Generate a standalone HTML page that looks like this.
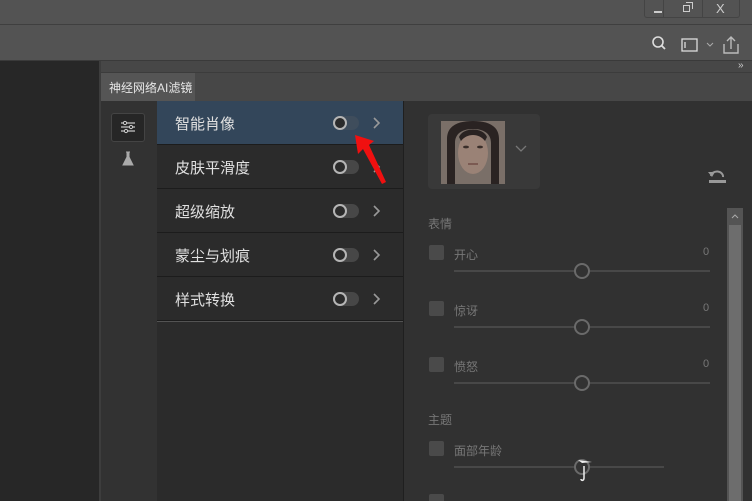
<!DOCTYPE html><html><head><meta charset="utf-8"><style>
*,*:before{margin:0;padding:0;box-sizing:border-box}
html,body{width:752px;height:501px;overflow:hidden}
body{background:#535353;position:relative;font-family:"Liberation Sans","Noto Sans CJK SC",sans-serif}
.a{position:absolute}
.row{position:absolute;left:157px;width:246px;height:44px;border-bottom:1px solid #1c1c1c;background:#2b2b2b}
.row span{position:absolute;left:18px;top:12px;font-size:15px;color:#e0e0e0}
.tg{position:absolute;left:176px;top:15px;width:26px;height:14px;border-radius:7px;background:#474747}
.tg:before{content:"";position:absolute;left:0;top:0;width:14px;height:14px;border-radius:50%;border:2px solid #b5b5b5;background:#2b2b2b}
.ch{position:absolute;left:216px;top:16px}
.lbl{position:absolute;font-size:12px;color:#777}
.cb{position:absolute;left:429px;width:15px;height:15px;border-radius:2px;background:#4a4a4a}
.sl{position:absolute;left:454px;width:256px;height:2px;background:#484848}
.th{position:absolute;left:574px;width:16px;height:16px;border-radius:50%;border:2px solid #6a6a6a;background:#323232}
</style></head><body>
<div class="a" style="left:0;top:24px;width:752px;height:1px;background:#3f3f3f"></div>
<div class="a" style="left:644px;top:0;width:96px;height:18px;border:1px solid #444;border-top:none;border-radius:0 0 3px 3px"></div>
<div class="a" style="left:663px;top:0;width:1px;height:18px;background:#444"></div>
<div class="a" style="left:702px;top:0;width:1px;height:18px;background:#444"></div>
<div class="a" style="left:654px;top:11px;width:8px;height:2px;background:#ccc"></div>
<div class="a" style="left:683px;top:5px;width:7px;height:7px;border:1px solid #ccc"></div>
<div class="a" style="left:686px;top:2px;width:7px;height:7px;border:1px solid #ccc;border-left:none;border-bottom:none"></div>
<div class="a" style="left:716px;top:1px;font-size:13px;color:#ccc">X</div>
<svg class="a" style="left:650px;top:35px" width="90" height="20" viewBox="0 0 90 20"><circle cx="8" cy="7" r="5" fill="none" stroke="#ddd" stroke-width="1.6"/><line x1="11.5" y1="10.5" x2="15" y2="14" stroke="#ddd" stroke-width="1.8"/><rect x="32" y="4" width="15" height="12" fill="none" stroke="#ddd" stroke-width="1.3"/><line x1="35" y1="7" x2="35" y2="13" stroke="#ddd" stroke-width="1.3"/><path d="M57 8l3 3 3-3" fill="none" stroke="#aaa" stroke-width="1"/><path d="M74 9v9h14V9M81 14V2M77 6l4-4 4 4" fill="none" stroke="#bbb" stroke-width="1.4"/></svg>
<div class="a" style="left:0;top:60px;width:752px;height:1px;background:#3a3a3a"></div>
<div class="a" style="left:0;top:61px;width:99px;height:440px;background:#272727"></div>
<div class="a" style="left:99px;top:61px;width:2px;height:440px;background:#3d3d3d"></div>
<div class="a" style="left:101px;top:61px;width:651px;height:11px;background:#474747"></div>
<div class="a" style="left:738px;top:60px;font-size:10px;color:#ccc">»</div>
<div class="a" style="left:101px;top:72px;width:651px;height:29px;background:#474747;border-top:1px solid #3c3c3c"></div>
<div class="a" style="left:101px;top:73px;width:94px;height:28px;background:#555"></div>
<div class="a" style="left:109px;top:79px;font-size:12px;color:#e6e6e6">神经网络AI滤镜</div>
<div class="a" style="left:101px;top:101px;width:56px;height:400px;background:#323232"></div>
<div class="a" style="left:111px;top:113px;width:34px;height:29px;background:#262626;border:1px solid #444;border-radius:3px"></div>
<svg class="a" style="left:119px;top:119px" width="18" height="16"><g stroke="#ccc" stroke-width="1.2"><line x1="2" y1="4" x2="16" y2="4"/><line x1="2" y1="8" x2="16" y2="8"/><line x1="2" y1="12" x2="16" y2="12"/></g><g fill="#262626" stroke="#ccc"><circle cx="6" cy="4" r="1.6"/><circle cx="12" cy="8" r="1.6"/><circle cx="7" cy="12" r="1.6"/></g></svg>
<svg class="a" style="left:121px;top:151px" width="14" height="16"><path d="M5 1h4M6 1v5L2 14h10L8 6V1" fill="#aaa" stroke="#aaa"/></svg>
<div class="row" style="top:101px;background:#33465a"><span>智能肖像</span><div class="tg" style="background:#3f4d5c"></div><svg class="ch" width="8" height="12"><path d="M1 1l5 5-5 5" fill="none" stroke="#999" stroke-width="1.6"/></svg></div>
<div class="row" style="top:145px"><span>皮肤平滑度</span><div class="tg"></div><svg class="ch" width="8" height="12"><path d="M1 1l5 5-5 5" fill="none" stroke="#999" stroke-width="1.6"/></svg></div>
<div class="row" style="top:189px"><span>超级缩放</span><div class="tg"></div><svg class="ch" width="8" height="12"><path d="M1 1l5 5-5 5" fill="none" stroke="#999" stroke-width="1.6"/></svg></div>
<div class="row" style="top:233px"><span>蒙尘与划痕</span><div class="tg"></div><svg class="ch" width="8" height="12"><path d="M1 1l5 5-5 5" fill="none" stroke="#999" stroke-width="1.6"/></svg></div>
<div class="row" style="top:277px"><span>样式转换</span><div class="tg"></div><svg class="ch" width="8" height="12"><path d="M1 1l5 5-5 5" fill="none" stroke="#999" stroke-width="1.6"/></svg></div>
<div class="a" style="left:157px;top:322px;width:246px;height:179px;background:#2b2b2b"></div>
<svg class="a" style="left:352px;top:132px" width="36" height="54"><path d="M3 3L22 9 17 13 34 50 30 52 11 17 6 22Z" fill="#f01010"/></svg>
<div class="a" style="left:403px;top:101px;width:1px;height:400px;background:#1f1f1f"></div>
<div class="a" style="left:404px;top:101px;width:348px;height:400px;background:#313131"></div>
<div class="a" style="left:428px;top:114px;width:112px;height:75px;background:#393939;border-radius:4px"></div>
<svg class="a" style="left:441px;top:121px" width="64" height="63"><rect width="64" height="63" fill="#7a6f68"/><path d="M6 63V18C6 4 18 0 32 0S58 4 58 18v45H50V22C50 12 42 8 32 8S14 12 14 22v41Z" fill="#2a2322"/><ellipse cx="32" cy="32" rx="15" ry="21" fill="#9a8276"/><path d="M18 16C22 6 42 6 46 16L44 20C38 12 26 12 20 20Z" fill="#2a2322"/><g fill="#3a2e2a"><ellipse cx="25" cy="26" rx="3" ry="1.4"/><ellipse cx="39" cy="26" rx="3" ry="1.4"/></g><rect x="27" y="42" width="10" height="2" fill="#7b5a52"/></svg>
<svg class="a" style="left:515px;top:145px" width="12" height="8"><path d="M1 1l5 5 5-5" fill="none" stroke="#777" stroke-width="1.3"/></svg>
<svg class="a" style="left:707px;top:167px" width="20" height="17"><path d="M4 9A6 5 0 1 1 16 10" fill="none" stroke="#999" stroke-width="2"/><path d="M1 5l4 5 3-5z" fill="#999"/><rect x="2" y="13" width="17" height="3" fill="#999"/></svg>
<div class="a" style="left:727px;top:208px;width:16px;height:293px;background:#545454"></div>
<div class="a" style="left:729px;top:225px;width:12px;height:276px;background:#6d6d6d"></div>
<svg class="a" style="left:731px;top:213px" width="8" height="6"><path d="M1 5l3-3 3 3" fill="none" stroke="#aaa"/></svg>
<div class="lbl" style="left:428px;top:215px">表情</div>
<div class="cb" style="top:245px"></div><div class="lbl" style="left:454px;top:246px">开心</div><div class="lbl" style="left:703px;top:246px;font-size:11px">0</div>
<div class="sl" style="top:270px"></div><div class="th" style="top:263px"></div>
<div class="cb" style="top:301px"></div><div class="lbl" style="left:454px;top:302px">惊讶</div><div class="lbl" style="left:703px;top:302px;font-size:11px">0</div>
<div class="sl" style="top:326px"></div><div class="th" style="top:319px"></div>
<div class="cb" style="top:357px"></div><div class="lbl" style="left:454px;top:358px">愤怒</div><div class="lbl" style="left:703px;top:358px;font-size:11px">0</div>
<div class="sl" style="top:382px"></div><div class="th" style="top:375px"></div>
<div class="lbl" style="left:428px;top:411px">主题</div>
<div class="cb" style="top:441px"></div><div class="lbl" style="left:454px;top:442px">面部年龄</div>
<div class="sl" style="top:466px;width:210px"></div><div class="th" style="top:459px"></div>
<svg class="a" style="left:574px;top:456px" width="20" height="28"><path d="M4 4L18 6 8 7Z" fill="#eee"/><path d="M10 10v12c0 3-3 3-3 1" fill="none" stroke="#eee" stroke-width="1.5"/></svg>
<div class="cb" style="top:494px"></div>
</body></html>
